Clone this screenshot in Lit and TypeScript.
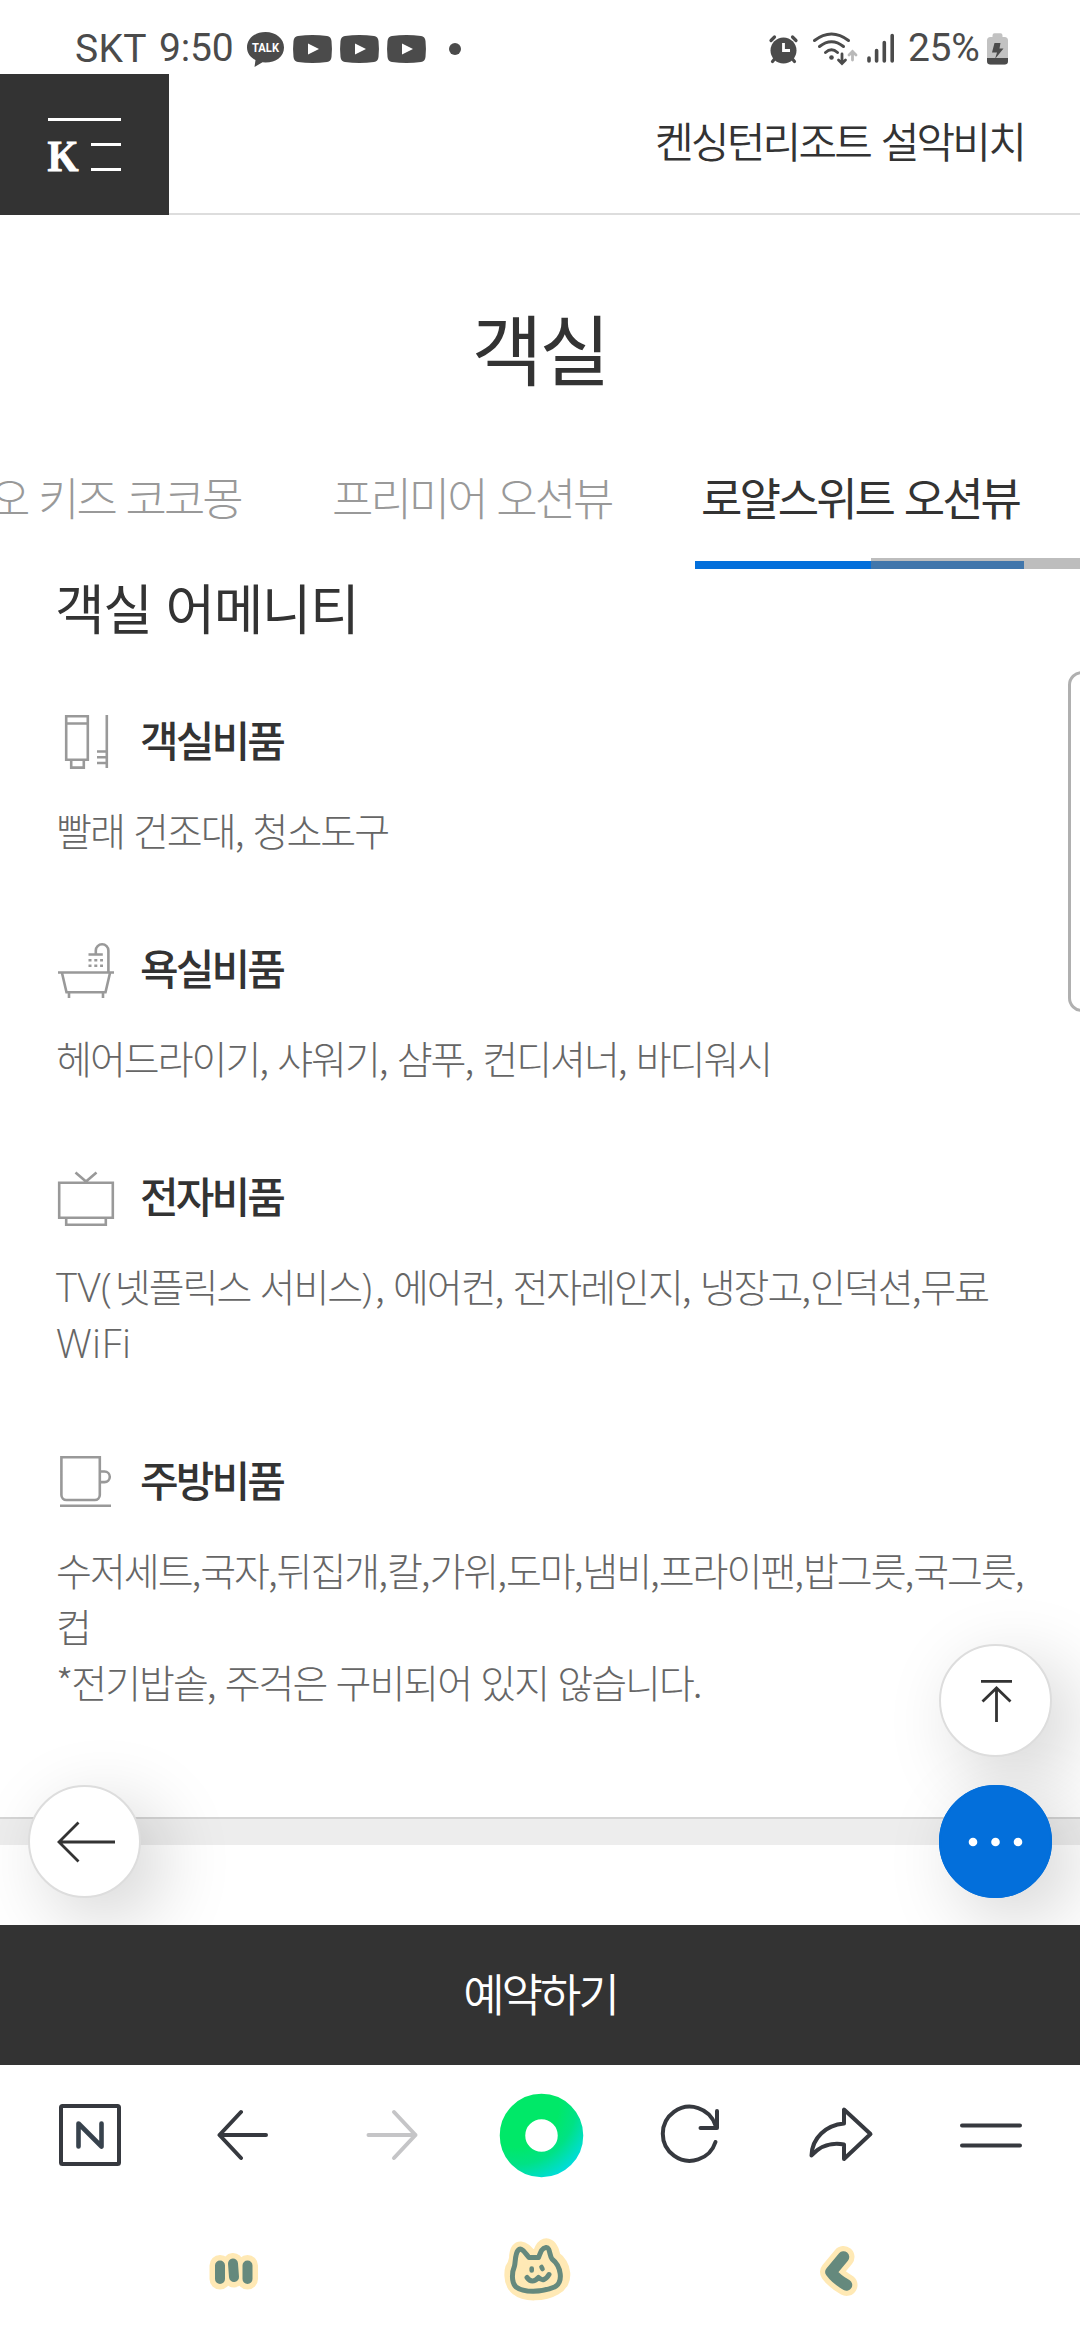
import { LitElement, html, css, svg } from "lit";
import { customElement } from "lit/decorators.js";

const sections = [
  {
    title: "객실비품",
    lines: ["빨래 건조대, 청소도구"],
    icon: svg`<g fill="none" stroke="#999" stroke-width="2.600"><path d="M8.2 4.2H29.8V47.8H8.2ZM8.2 11.5H29.8M13.2 48V55.6H25.8V48M48.8 3V56M39 39.5H48M39 45.2H48M39 51H48"/></g>`,
  },
  {
    title: "욕실비품",
    lines: ["헤어드라이기, 샤워기, 샴푸, 컨디셔너, 바디워시"],
    icon: svg`<g fill="none" stroke="#999" stroke-width="2.600"><path d="M0 32.5H56M4 33L8.5 52.3H47.5L52 33M11 53V58M45 53V58M50.4 32V10.5a6.3 6.3 0 0 0-12.6 0V14.5M30.5 14.5H44.8"/><path d="M30.5 20.3H45M30.5 25.7H45" stroke-dasharray="3 2.8"/></g>`,
  },
  {
    title: "전자비품",
    lines: ["TV(넷플릭스 서비스), 에어컨, 전자레인지, 냉장고,인덕션,무료", "WiFi"],
    icon: svg`<g fill="none" stroke="#999" stroke-width="2.600"><path d="M1.2 14.8H54.8V49.8H1.2ZM8.2 50V56.8H47.8V50M17.5 4.5L28 13.5L38.5 4.5"/></g>`,
  },
  {
    title: "주방비품",
    lines: ["수저세트,국자,뒤집개,칼,가위,도마,냄비,프라이팬,밥그릇,국그릇,", "컵", "*전기밥솥, 주걱은 구비되어 있지 않습니다."],
    icon: svg`<g fill="none" stroke="#999" stroke-width="2.600"><path d="M3.4 5.2H41.8V43a5 5 0 0 1-5 5H8.4a5 5 0 0 1-5-5ZM42 19.5h4.5a5.2 5.2 0 0 1 0 10.6H42M2 53.8H53"/></g>`,
  },
];

// Latin letters, brackets and commas keep a looser tracking than the Hangul around them.
const tracked = (line: string) =>
  line.split(/([A-Za-z]+|[()]|,)/).map((part) => {
    if (part === ",") return html`<i class="comma">,</i>`;
    if (part === "(" || part === ")") return html`<i class="latin bracket">${part}</i>`;
    return /^[A-Za-z]/.test(part) ? html`<i class="latin">${part}</i>` : part;
  });

const play = html`<svg class="yt" width="39" height="28" viewBox="0 0 39 28"><path fill="#4b4b4b" d="M5 1Q19.5-.8 34 1Q38 1.5 38.5 6Q39.4 14 38.5 22Q38 26.5 34 27Q19.5 28.8 5 27Q1 26.5.5 22Q-.4 14 .5 6Q1 1.500 5 1Z"/><path fill="#fff" d="M15 8.500L26 14L15 19.500Z"/></svg>`;

@customElement("app-root")
export class AppRoot extends LitElement {
  static styles = css`
    :host {
      display: block;
      position: relative;
      width: 1080px;
      height: 2340px;
      overflow: hidden;
      background: #fff;
      color: #333;
      font-family: "Noto Sans CJK KR", sans-serif;
    }
    * { box-sizing: border-box; }
    svg { display: block; flex: none; overflow: visible; }
    .page { display: flex; flex-direction: column; height: 2340px; }
    .status {
      display: flex;
      height: 74px;
      padding: 0 72px 0 75px;
      font: 400 39px/46px Roboto, sans-serif;
      color: #4b4b4b;
    }
    .status > * { flex: none; }
    .carrier { margin-top: 26px; width: 84px; white-space: nowrap; letter-spacing: 0.3px; }
    .clock { margin-top: 25px; width: 88px; white-space: nowrap; letter-spacing: -0.2px; }
    .yt { margin: 35px 8px 0 0; }
    .talk { margin: 32px 9px 0 0; }
    .more { margin: 43px 0 0 15px; }
    .status .spacer { flex: 1 1 auto; }
    .pct { margin: 25px 0 0 14px; width: 79px; white-space: nowrap; letter-spacing: -0.3px; }
    .head {
      display: flex;
      height: 141px;
      justify-content: space-between;
      border-bottom: 2px solid #ddd;
    }
    .brand { width: 169px; height: 141px; background: #333; }
    .resort { margin-right: 56px; padding-top: 36px; font-size: 42px; line-height: 60px; letter-spacing: -2.8px; word-spacing: 4px; font-weight: 350; }
    h1, h2, h3, p { margin: 0; }
    h1 { margin-top: 75px; height: 114px; text-align: center; font-size: 77px; line-height: 114px; font-weight: 400; letter-spacing: -3px; text-indent: -1px; }
    .tabs { display: flex; position: relative; height: 165px; overflow: hidden; white-space: nowrap; font-size: 45px; letter-spacing: -3px; word-spacing: 3.7px; font-weight: 300; color: #999; }
    .tab { flex: none; height: 165px; padding-top: 60px; line-height: 66px; }
    .t1 { width: 328px; margin-left: -11px; }
    .t2 { margin-left: 15px; width: 363px; }
    .t3 { width: 329px; padding-left: 6px; color: #333; font-weight: 400; border-bottom: 8px solid #036fdb; }
    .thumb { position: absolute; right: 0; bottom: 0; width: 209px; height: 11px; background: rgba(126, 126, 126, 0.51); }
    h2 { margin: -1px 0 0 55px; height: 78px; font-size: 54px; line-height: 78px; font-weight: 400; letter-spacing: -1.500px; word-spacing: 3.5px; }
    .list { display: flex; flex-direction: column; gap: 84px; margin: 66px 0 0 57px; width: 1020px; height: 1105px; }
    .row { display: flex; align-items: center; gap: 26px; height: 60px; }
    h3 { margin-top: -6px; font-size: 42px; line-height: 60px; font-weight: 500; letter-spacing: -2.9px; }
    p { padding-top: 29px; margin: 0 0 -1px -1px; }
    p span { display: block; white-space: nowrap; font-size: 39px; line-height: 56px; height: 56px; font-weight: 300; color: #666; letter-spacing: -2px; word-spacing: 2.6px; }
    i { font-style: normal; }
    .latin { font-family: "Open Sans", "Noto Sans CJK KR", sans-serif; font-size: 40px; line-height: 1; letter-spacing: 0.4px; }
    .bracket { letter-spacing: 3px; }
    .comma { letter-spacing: -1.1px; }
    .band { height: 28px; background: #ededed; border-top: 2px solid #d5d5d5; }
    .reserve { margin-top: 80px; height: 140px; background: #333; color: #fff; text-align: center; font-size: 45px; line-height: 136px; letter-spacing: -3px; font-weight: 350; }
    .nav { display: flex; height: 142px; }
    .float { position: absolute; width: 113px; height: 113px; border-radius: 50%; background: #fff; border: 2px solid #ddd; box-shadow: 20px 20px 75px rgba(0, 0, 0, 0.18); }
    .float svg { margin: -2px; }
    .back { left: 28px; top: 1785px; }
    .top { left: 939px; top: 1644px; }
    .dots { left: 939px; top: 1785px; background: #036fdb; border-color: #036fdb; }
    .flat { box-shadow: none; }
    .clip { position: absolute; inset: 0 0 415px; overflow: hidden; pointer-events: none; }
    .edge { position: absolute; left: 1068px; top: 671px; width: 30px; height: 341px; border: 3px solid #b0b0b0; border-radius: 14px; background: #fff; }
  `;

  render() {
    return html`<div class="page">
        <div class="status">
          <span class="carrier">SKT</span><span class="clock">9:50</span>
          <svg class="talk" width="37" height="35" viewBox="0 0 37 35"><path fill="#4b4b4b" d="M18.500 0C29 0 37 6.500 37 15.500S29 30.500 18.500 30.500L15.500 30.300L7.500 35L8.500 28C3.500 25.500 0 21 0 15.500C0 6.500 8 0 18.500 0Z"/><text x="18.500" y="20.300" text-anchor="middle" textLength="27" lengthAdjust="spacingAndGlyphs" font-family="Roboto" font-weight="700" font-size="13.500" fill="#fff">TALK</text></svg>
          ${play}${play}${play}
          <svg class="more" width="12" height="12"><circle cx="6" cy="6" r="6" fill="#4b4b4b"/></svg>
          <span class="spacer"></span>
          <svg width="126" height="74" viewBox="767 0 126 74" fill="none" stroke="#4b4b4b" stroke-linecap="round">
            <circle cx="782.500" cy="50.500" r="13" fill="#4b4b4b" stroke="none"/>
            <path stroke-width="3.200" d="M770 40.500L773.500 37M795 40.500L791.500 37M771.500 61.500L774 58.500M793.500 61.500L791 58.500"/>
            <path stroke="#fff" stroke-width="2.800" stroke-linecap="butt" d="M782.500 43V50.500H789"/>
            <path stroke-width="3" d="M813.500 40.500Q830.500 27.500 847.500 40.500M818.500 46.500Q830.500 37 842.500 46.500M824.500 52.500Q830.500 47 836.500 52.500"/>
            <circle cx="830.500" cy="57.500" r="2.300" fill="#4b4b4b" stroke="none"/>
            <path stroke-width="2.800" d="M841 54V63M837.500 60L841 63.500L844.500 60"/>
            <path stroke="#b9b9b9" stroke-width="2.800" d="M851.500 60V51.500M848 55L851.500 51.500L855 55"/>
            <path stroke-width="3.600" d="M868 58V61M875.600 50.500V61M883.300 42.500V61M891.200 35.500V61"/>
          </svg>
          <span class="pct">25%</span>
          <svg width="21" height="74" viewBox="986 0 21 74"><path fill="#c2c2c2" d="M991.500 37V35.500Q991.500 33.300 993.500 33.300H999.500Q1001.500 33.300 1001.500 35.500V37H1003.500Q1007 37 1007 40.500V61Q1007 64.500 1003.500 64.500H989.500Q986 64.500 986 61V40.500Q986 37 989.500 37Z"/><path fill="#4b4b4b" d="M986 58H1007V61Q1007 64.500 1003.500 64.500H989.500Q986 64.500 986 61Z"/><path fill="#4b4b4b" d="M993.500 43H999.500L998.500 48.500H1002.500L994 59L996 52.500H991Z"/></svg>
        </div>
        <header class="head">
          <div class="brand"><svg width="169" height="141" viewBox="0 74 169 141"><path fill="#fff" d="M48 118H121V121H48ZM91 143H121V146H91ZM91 168H121V171H91Z"/><text x="47.500" y="171" font-family="Liberation Serif" font-weight="700" font-size="44.500" textLength="31" lengthAdjust="spacingAndGlyphs" fill="#fff" stroke="#fff" stroke-width="0.900">K</text></svg></div>
          <div class="resort">켄싱턴리조트 설악비치</div>
        </header>
        <h1>객실</h1>
        <nav class="tabs"><div class="tab t1">오 키즈 코코몽</div><div class="tab t2">프리미어 오션뷰</div><div class="tab t3">로얄스위트 오션뷰</div><i class="thumb"></i></nav>
        <h2>객실 어메니티</h2>
        <div class="list">
          ${sections.map((s) => html`<section><div class="row"><svg width="57" height="60" viewBox="-1 0 57 60">${s.icon}</svg><h3>${s.title}</h3></div><p>${s.lines.map((l) => html`<span>${tracked(l)}</span>`)}</p></section>`)}
        </div>
        <div class="band"></div>
        <div class="reserve">예약하기</div>
        <svg class="nav" width="1080" height="142" viewBox="0 2065 1080 142" fill="none" stroke="#36393f" stroke-width="4" stroke-linecap="round" stroke-linejoin="round">
          <defs><radialGradient id="g" gradientUnits="userSpaceOnUse" cx="515" cy="2103" r="88"><stop offset=".5" stop-color="#00e868"/><stop offset=".7" stop-color="#00e285"/><stop offset=".95" stop-color="#00dcdc"/></radialGradient></defs>
          <rect x="61" y="2106" width="58" height="58" rx="1.500"/>
          <path stroke="#37424d" stroke-width="4.600" d="M78.500 2146.500V2123.500L101.500 2146.500V2123.500"/>
          <path d="M266 2135H219.500M241 2112L219.500 2135L241 2158"/>
          <path stroke="#c5c5c7" d="M368.500 2135H415.500M394 2112L415.500 2135L394 2158"/>
          <circle cx="541.500" cy="2135.500" r="29" stroke="url(#g)" stroke-width="25.500"/>
          <path d="M715.500 2142A27 27 0 1 1 715.500 2125.500M717 2111V2128H700.500"/>
          <path d="M844 2109.500V2123.500C826 2125 812 2138 811.500 2155.500C820 2146 832 2142 844 2144.500V2159L870.500 2134Z"/>
          <path d="M962 2125.500H1020M962 2145.500H1020"/>
        </svg>
        <svg width="1080" height="133" viewBox="0 2207 1080 133" fill="none" stroke-linecap="round" stroke-linejoin="round">
          <path stroke="#ffe9b5" stroke-width="21" d="M220 2265.500V2279M233 2263.500L234 2277M247.500 2265.500V2279"/>
          <path stroke="#65897d" stroke-width="10" d="M220 2265.500V2279M233 2263.500L234 2277M247.500 2265.500V2279"/>
          <path stroke="#ffe9b5" stroke-width="16" fill="#ffe9b5" d="M517 2259C517 2251 519 2247 524 2251L530 2257H540C542 2247 547 2242 551 2251L553 2258C564 2266 566 2281 555 2287C543 2294 525 2294 518 2288C510 2282 512 2268 515 2266Z"/>
          <path stroke="#65897d" stroke-width="5" d="M514.500 2266C515.500 2262 515 2254 518 2250.500C521 2247 524 2251 529 2257.500H538.500C541 2251 542 2248 546 2247.500C550 2247 549.500 2256 552 2259C561 2266 564 2282 554.500 2287C541 2292.500 524 2293 516 2287C511 2282 512 2272 514.500 2266ZM527 2277.500Q532 2284.500 538.500 2277.500Q544 2283 549 2274.500"/>
          <path stroke="#65897d" stroke-width="4.600" d="M531.700 2268.500V2270.500M541.500 2267L542.500 2269"/>
          <path stroke="#ffe9b5" stroke-width="22" d="M843.500 2257L831 2272Q836 2279 846.500 2285"/>
          <path stroke="#65897d" stroke-width="11.500" d="M843.500 2257L831 2272Q836 2279 846.500 2285"/>
        </svg>
      </div>
      <div class="clip">
        <div class="float back"><svg width="113" height="113" viewBox="28 1785 113 113" fill="none" stroke="#333" stroke-width="2.800"><path d="M115 1842H59M78.500 1822.500L59 1842L78.500 1861.500"/></svg></div>
        <div class="float dots"></div>
        <div class="float top"><svg width="113" height="113" viewBox="939 1644 113 113" fill="none" stroke="#333" stroke-width="2.800"><path d="M981 1681.300H1012M996.500 1722V1688M982.500 1701.500L996.500 1688L1010.500 1701.500"/></svg></div>
        <div class="float dots flat"><svg width="113" height="113" fill="#fff"><circle cx="34" cy="57" r="4.300"/><circle cx="56.500" cy="57" r="4.300"/><circle cx="79" cy="57" r="4.300"/></svg></div>
        <div class="edge"></div>
      </div>`;
  }
}
